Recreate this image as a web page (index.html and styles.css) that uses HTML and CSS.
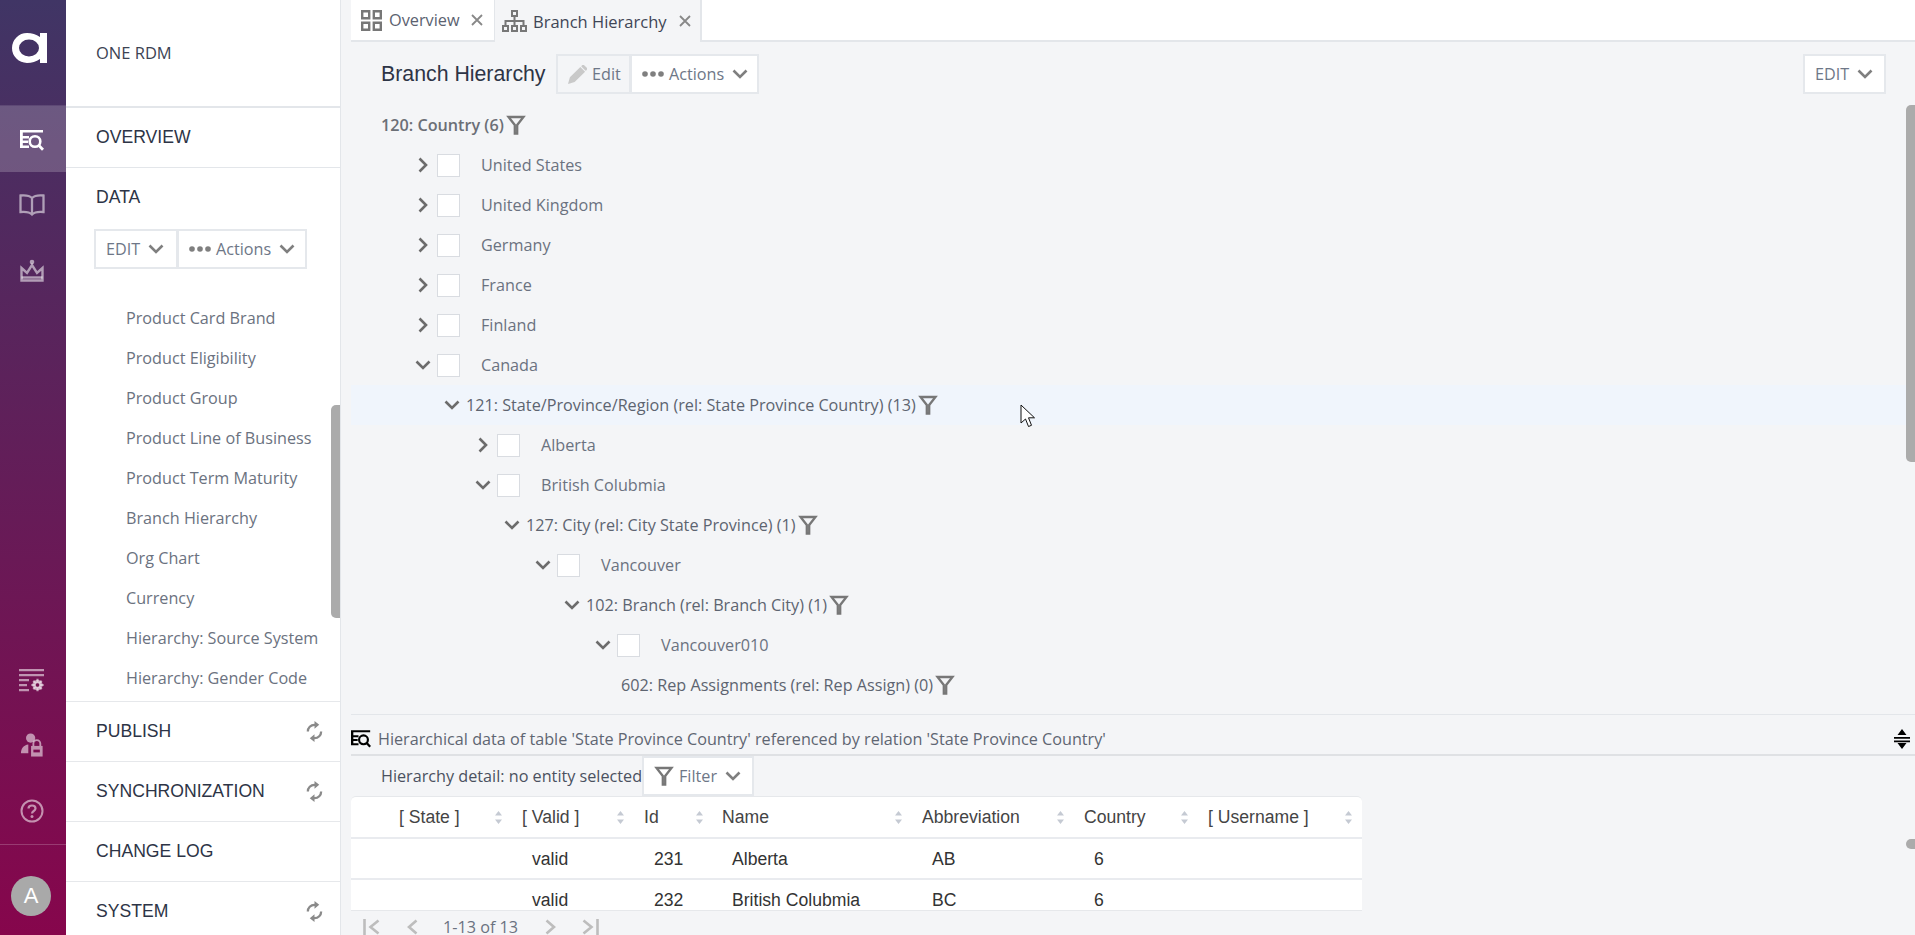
FILE: index.html
```html
<!DOCTYPE html>
<html lang="en">
<head>
<meta charset="utf-8">
<title>Branch Hierarchy</title>
<link rel="stylesheet" href="styles.css">
</head>
<body>
<svg class="defs" width="0" height="0" aria-hidden="true">
  <defs>
    <symbol id="chev-d" viewBox="0 0 16 10"><path d="M1.500 1.500 8 8l6.500-6.500" fill="none" stroke="currentColor" stroke-width="2.600"/></symbol>
    <symbol id="chev-r" viewBox="0 0 10 16"><path d="M1.500 1.500 8 8l-6.500 6.500" fill="none" stroke="currentColor" stroke-width="2.600"/></symbol>
    <symbol id="filter" viewBox="0 0 20 20"><path d="M2.500 2h15L11.200 10v8.500H8.800V10z" fill="none" stroke="currentColor" stroke-width="2.300"/></symbol>
    <symbol id="sync" viewBox="0 0 20 24"><path d="M3 12c0-4 3-7 7-7h1M17 12c0 4-3 7-7 7H9" fill="none" stroke="currentColor" stroke-width="2.400"/><path d="M10 1l5 4-5 4zM10 23l-5-4 5-4z" fill="currentColor"/></symbol>
    <symbol id="eq" viewBox="0 0 24 21"><path d="M0 0h23v2.500H0zM0 6h9v2.500H0zM0 0h2.800v18H0zM0 10.500h8V13H0zM0 15.500h9V18H0z" fill="currentColor"/><circle cx="15" cy="11.500" r="5.300" fill="none" stroke="currentColor" stroke-width="2.600"/><path d="m18.500 15 4.500 4.800" stroke="currentColor" stroke-width="2.800"/></symbol>
    <symbol id="dots" viewBox="0 0 22 6"><circle cx="3" cy="3" r="2.800" fill="currentColor"/><circle cx="11" cy="3" r="2.800" fill="currentColor"/><circle cx="19" cy="3" r="2.800" fill="currentColor"/></symbol>
    <symbol id="sort" viewBox="0 0 7 13"><path d="M3.500 0 7 4.500H0zM3.500 13 0 8.500h7z" fill="currentColor"/></symbol>
  </defs>
</svg>

<div class="app">
  <nav class="rail">
    <div class="rail-logo">
      <svg class="logo" viewBox="0 0 36 30"><path fill-rule="evenodd" d="M15 0a15 15 0 1 0 0 30c5 0 9-1.500 13-4v4h7V0h-7v4C24 1.500 20 0 15 0zM17 6.500a10 8.500 0 1 1 0 17 10 8.500 0 0 1 0-17z" fill="#fff"/></svg>
    </div>
    <a class="rail-item rail-active"><svg class="ic-eq"><use href="#eq"/></svg></a>
    <a class="rail-item">
      <svg class="ic-rail" viewBox="0 0 26 24"><path d="M13 5C10.500 2.500 6 2 1.500 2.500v16.500C6 18.500 10.500 19 13 21.500 15.500 19 20 18.500 24.500 19V2.500C20 2 15.500 2.500 13 5zM13 5v16.500" fill="none" stroke="currentColor" stroke-width="2.300"/></svg>
    </a>
    <a class="rail-item">
      <svg class="ic-rail" viewBox="0 0 26 24"><circle cx="13" cy="3" r="2.300" fill="currentColor"/><path d="M2.500 9 8 14l5-8 5 8 5.500-5v12.500h-21z" fill="none" stroke="currentColor" stroke-width="2.400"/><path d="M2.500 18.500h21" stroke="currentColor" stroke-width="2.400"/></svg>
    </a>
    <div class="rail-gap"></div>
    <a class="rail-item rail-settings">
      <svg class="ic-rail" viewBox="0 0 26 24"><path d="M0 1.200h25M0 6.200h25M0 11.200h10M0 16.200h8M0 21.200h10" stroke="currentColor" stroke-width="2.300"/><circle cx="18.500" cy="16" r="3.700" fill="none" stroke="currentColor" stroke-width="3"/><path d="M18.500 9.800v12.400M12.300 16h12.400M14.300 11.800l8.400 8.400M22.700 11.800l-8.400 8.400" stroke="currentColor" stroke-width="2.200"/><circle cx="18.500" cy="16" r="1.700" fill="#741050"/></svg>
    </a>
    <a class="rail-item">
      <svg class="ic-rail" viewBox="0 0 24 26"><circle cx="10.500" cy="5.500" r="5" fill="currentColor"/><path d="M0 22c0-5 3-9 8-9.500l0 9.500z" fill="currentColor"/><path d="M11 14h12.500v11.500H11z" fill="currentColor"/><path d="M13.500 14v-2.500a3.700 3.700 0 0 1 7.500 0V14" fill="none" stroke="currentColor" stroke-width="2"/><path d="M13.500 19.500h7" stroke="#7a0c50" stroke-width="3"/></svg>
    </a>
    <a class="rail-item">
      <svg class="ic-help" viewBox="0 0 24 24"><circle cx="12" cy="12" r="10.500" fill="none" stroke="currentColor" stroke-width="2"/><path d="M8.500 9.500C8.500 7.500 10 6.500 12 6.500s3.500 1 3.500 3c0 2.500-3.500 2.500-3.500 5" fill="none" stroke="currentColor" stroke-width="2.200"/><circle cx="12" cy="17.500" r="1.500" fill="currentColor"/></svg>
    </a>
    <div class="rail-user"><span class="avatar">A</span></div>
  </nav>

  <aside class="side">
    <div class="side-head">ONE RDM</div>
    <div class="side-row side-overview">OVERVIEW</div>
    <div class="side-data">
      <div class="side-data-title">DATA</div>
      <div class="btn-group side-group">
        <span class="btn btn-side-edit">EDIT <svg class="chev"><use href="#chev-d"/></svg></span>
        <span class="btn btn-side-act"><svg class="dots"><use href="#dots"/></svg> Actions <svg class="chev"><use href="#chev-d"/></svg></span>
      </div>
      <ul class="side-list">
        <li>Product Card Brand</li>
        <li>Product Eligibility</li>
        <li>Product Group</li>
        <li>Product Line of Business</li>
        <li>Product Term Maturity</li>
        <li>Branch Hierarchy</li>
        <li>Org Chart</li>
        <li>Currency</li>
        <li>Hierarchy: Source System</li>
        <li>Hierarchy: Gender Code</li>
      </ul>
    </div>
    <div class="side-row">PUBLISH <svg class="sync"><use href="#sync"/></svg></div>
    <div class="side-row">SYNCHRONIZATION <svg class="sync"><use href="#sync"/></svg></div>
    <div class="side-row">CHANGE LOG</div>
    <div class="side-row">SYSTEM <svg class="sync"><use href="#sync"/></svg></div>
    <div class="side-thumb"></div>
  </aside>

  <main class="main">
    <div class="tabs">
      <div class="tab tab-overview">
        <svg class="tab-ic-o" viewBox="0 0 21 21"><path d="M1.200 1.200h7v7h-7zM12.800 1.200h7v7h-7zM1.200 12.800h7v7h-7zM12.800 12.800h7v7h-7z" fill="none" stroke="currentColor" stroke-width="2.400"/></svg>
        <span>Overview</span>
        <svg class="tab-x" viewBox="0 0 12 12"><path d="m1 1 10 10M11 1 1 11" stroke="currentColor" stroke-width="1.800"/></svg>
      </div>
      <div class="tab tab-active">
        <svg class="tab-ic-b" viewBox="0 0 25 22"><path d="M9 0h7v7H9zM0 15h7v7H0zM9 15h7v7H9zM18 15h7v7h-7z" fill="currentColor"/><path d="M12.500 6v9M3.500 15v-4h18v4" fill="none" stroke="currentColor" stroke-width="2"/><path d="M11 2h3v3h-3zM2 17h3v3H2zM11 17h3v3h-3zM20 17h3v3h-3z" fill="#f4f5f7"/></svg>
        <span>Branch Hierarchy</span>
        <svg class="tab-x" viewBox="0 0 12 12"><path d="m1 1 10 10M11 1 1 11" stroke="currentColor" stroke-width="1.800"/></svg>
      </div>
      <div class="tabs-rest"></div>
    </div>

    <div class="title-row">
      <h1 class="title">Branch Hierarchy</h1>
      <div class="btn-group">
        <span class="btn btn-off"><svg class="pencil" viewBox="0 0 20 20"><path d="M0 20l2-7L13 2l5 5L7 18zM14.500 .5a2 2 0 0 1 2.800 0l2.200 2.200a2 2 0 0 1 0 2.800L18.500 6 14 1.500z" fill="currentColor"/></svg> Edit</span>
        <span class="btn btn-act"><svg class="dots"><use href="#dots"/></svg> Actions <svg class="chev"><use href="#chev-d"/></svg></span>
      </div>
      <div class="title-fill"></div>
      <span class="btn btn-edit">EDIT <svg class="chev"><use href="#chev-d"/></svg></span>
    </div>

    <div class="tree">
      <div class="row rel-root"><b class="rel-strong">120: Country (6)</b><svg class="filter"><use href="#filter"/></svg></div>
      <div class="row ent l0"><svg class="exp-r"><use href="#chev-r"/></svg><i class="cb"></i><span class="lbl">United States</span></div>
      <div class="row ent l0"><svg class="exp-r"><use href="#chev-r"/></svg><i class="cb"></i><span class="lbl">United Kingdom</span></div>
      <div class="row ent l0"><svg class="exp-r"><use href="#chev-r"/></svg><i class="cb"></i><span class="lbl">Germany</span></div>
      <div class="row ent l0"><svg class="exp-r"><use href="#chev-r"/></svg><i class="cb"></i><span class="lbl">France</span></div>
      <div class="row ent l0"><svg class="exp-r"><use href="#chev-r"/></svg><i class="cb"></i><span class="lbl">Finland</span></div>
      <div class="row ent l0"><svg class="exp-d"><use href="#chev-d"/></svg><i class="cb"></i><span class="lbl">Canada</span></div>
      <div class="row rel r0 row-hover"><svg class="exp-rel"><use href="#chev-d"/></svg><span class="rel-text">121: State/Province/Region (rel: State Province Country) (13)</span><svg class="filter"><use href="#filter"/></svg></div>
      <div class="row ent l1"><svg class="exp-r"><use href="#chev-r"/></svg><i class="cb"></i><span class="lbl">Alberta</span></div>
      <div class="row ent l1"><svg class="exp-d"><use href="#chev-d"/></svg><i class="cb"></i><span class="lbl">British Colubmia</span></div>
      <div class="row rel r1"><svg class="exp-rel"><use href="#chev-d"/></svg><span class="rel-text">127: City (rel: City State Province) (1)</span><svg class="filter"><use href="#filter"/></svg></div>
      <div class="row ent l2"><svg class="exp-d"><use href="#chev-d"/></svg><i class="cb"></i><span class="lbl">Vancouver</span></div>
      <div class="row rel r2"><svg class="exp-rel"><use href="#chev-d"/></svg><span class="rel-text">102: Branch (rel: Branch City) (1)</span><svg class="filter"><use href="#filter"/></svg></div>
      <div class="row ent l3"><svg class="exp-d"><use href="#chev-d"/></svg><i class="cb"></i><span class="lbl">Vancouver010</span></div>
      <div class="row rel-leaf"><span class="rel-text">602: Rep Assignments (rel: Rep Assign) (0)</span><svg class="filter"><use href="#filter"/></svg></div>
    </div>

    <div class="detail-head">
      <svg class="ic-eq-sm"><use href="#eq"/></svg>
      <span>Hierarchical data of table 'State Province Country' referenced by relation 'State Province Country'</span>
      <svg class="split" viewBox="0 0 16 20"><path d="M8 0l4.500 6h-9zM8 20l-4.500-6h9zM0 8h16v1.800H0zM0 11.500h16v1.800H0z" fill="#000"/></svg>
    </div>
    <div class="detail-bar">
      <span class="detail-label">Hierarchy detail: no entity selected</span>
      <span class="btn btn-filter"><svg class="filter-btn"><use href="#filter"/></svg> Filter <svg class="chev"><use href="#chev-d"/></svg></span>
    </div>

    <div class="table">
      <div class="tr th">
        <div class="c c1"><span>[ State ]</span><svg class="sort"><use href="#sort"/></svg></div>
        <div class="c c2"><span>[ Valid ]</span><svg class="sort"><use href="#sort"/></svg></div>
        <div class="c c3"><span>Id</span><svg class="sort"><use href="#sort"/></svg></div>
        <div class="c c4"><span>Name</span><svg class="sort"><use href="#sort"/></svg></div>
        <div class="c c5"><span>Abbreviation</span><svg class="sort"><use href="#sort"/></svg></div>
        <div class="c c6"><span>Country</span><svg class="sort"><use href="#sort"/></svg></div>
        <div class="c c7"><span>[ Username ]</span><svg class="sort"><use href="#sort"/></svg></div>
      </div>
      <div class="tr td">
        <div class="c c1"></div><div class="c c2">valid</div><div class="c c3">231</div><div class="c c4">Alberta</div><div class="c c5">AB</div><div class="c c6">6</div><div class="c c7"></div>
      </div>
      <div class="tr td">
        <div class="c c1"></div><div class="c c2">valid</div><div class="c c3">232</div><div class="c c4">British Colubmia</div><div class="c c5">BC</div><div class="c c6">6</div><div class="c c7"></div>
      </div>
    </div>

    <div class="pager">
      <svg class="pg pg-first" viewBox="0 0 18 16"><path d="M1.500 0v16" stroke="currentColor" stroke-width="2.600"/><path d="M15.500 1.500 7.500 8l8 6.500" fill="none" stroke="currentColor" stroke-width="2.600"/></svg>
      <svg class="pg pg-prev" viewBox="0 0 11 16"><path d="M9.500 1.500 2 8l7.500 6.500" fill="none" stroke="currentColor" stroke-width="2.600"/></svg>
      <span class="pg-text">1-13 of 13</span>
      <svg class="pg pg-next" viewBox="0 0 11 16"><path d="M1.500 1.500 9 8l-7.500 6.500" fill="none" stroke="currentColor" stroke-width="2.600"/></svg>
      <svg class="pg pg-last" viewBox="0 0 18 16"><path d="M2.500 1.500 10.500 8l-8 6.500" fill="none" stroke="currentColor" stroke-width="2.600"/><path d="M16.500 0v16" stroke="currentColor" stroke-width="2.600"/></svg>
    </div>

    <div class="thumb-main"></div>
    <div class="thumb-dot"></div>
    <svg class="cursor" viewBox="0 0 15 24"><path d="M1 1v18l4.500-4 3 7.500 3-1.200-3-7.500H14.500z" fill="#fff" stroke="#111" stroke-width="1"/></svg>
  </main>
</div>
</body>
</html>
```

FILE: styles.css
```css
* { box-sizing: border-box; }
html, body { margin: 0; height: 100%; overflow: hidden; }
body { font-family: "Open Sans", sans-serif; color: #555; }
.defs { position: absolute; }
ul { list-style: none; margin: 0; padding: 0; }
svg { display: block; flex: none; }

.app { display: flex; width: 1915px; height: 935px; }

/* rail */
.rail {
  width: 66px; flex: none; display: flex; flex-direction: column;
  background: linear-gradient(180deg, #403565 0%, #86064c 100%);
  color: rgba(255,255,255,.55);
}
.rail-logo { height: 106px; flex: none; display: flex; align-items: flex-start; padding: 33px 0 0 12px; border-bottom: 1px solid rgba(255,255,255,.12); }
.logo { width: 36px; height: 30px; }
.rail-item { height: 66px; flex: none; display: flex; align-items: center; justify-content: center; padding-right: 2px; }
.rail-active { background: rgba(255,255,255,.2); color: #fff; padding-top: 3px; }
.rail-settings { padding-top: 4px; }
.ic-eq { width: 24px; height: 21px; }
.ic-rail { width: 26px; height: 24px; }
.ic-help { width: 24px; height: 24px; }
.rail-gap { flex: 1; }
.rail-user { height: 91px; flex: none; border-top: 1px solid rgba(255,255,255,.2); padding: 31px 0 0 11px; }
.avatar {
  display: flex; align-items: center; justify-content: center;
  width: 40px; height: 40px; border-radius: 50%;
  background: #a9a9a9; color: #fff; font: 22px "Liberation Sans", sans-serif;
}

/* sidebar */
.side {
  position: relative; width: 275px; flex: none; height: 935px; overflow: hidden;
  display: flex; flex-direction: column; background: #fff;
  border-right: 1px solid #e3e6ea;
}
.side-head {
  height: 108px; flex: none; display: flex; align-items: center; padding: 0 0 2px 30px;
  border-bottom: 2px solid #e3e6ea; font-size: 16.500px; color: #3c4353;
}
.side-row {
  height: 60px; flex: none; display: flex; align-items: center; justify-content: space-between;
  padding: 0 16px 0 30px; border-top: 1px solid #e6e8eb;
  font: 17.600px "Liberation Sans", sans-serif; color: #2d3446;
}
.side-overview { height: 60px; border-top: 0; border-bottom: 1px solid #e3e6ea; }
.side-data { height: 533px; flex: none; overflow: hidden; display: flex; flex-direction: column; }
.side-data-title { height: 61px; flex: none; display: flex; align-items: center; padding: 0 0 3px 30px; font: 17.600px "Liberation Sans", sans-serif; color: #2d3446; }
.side-group { margin-left: 28px; align-self: flex-start; flex: none; }
.btn-side-edit { width: 84px; }
.btn-side-act { width: 130px; }
.side-list { padding: 29px 0 0 60px; }
.side-list li { height: 40px; line-height: 40px; font-size: 16.200px; color: #6b7280; white-space: nowrap; }
.sync { width: 19px; height: 23px; color: #8a8a8a; }
.side-thumb { position: absolute; right: 0; top: 405px; width: 9px; height: 213px; border-radius: 5px 0 0 5px; background: #ababab; }

/* buttons */
.btn-group { display: flex; }
.btn {
  height: 40px; display: inline-flex; align-items: center; gap: 5px; padding: 0 10px;
  background: #fff; border: 2px solid #e5e8ec; font-size: 16.200px; color: #6e7787; white-space: nowrap;
}
.btn + .btn { margin-left: -1px; }
.chev { width: 16px; height: 10px; color: #7f7f7f; margin-left: 3px; }
.dots { width: 22px; height: 6px; color: #7f7f7f; }
.btn-off { background: #f4f5f7; width: 75px; }
.btn-act { width: 129px; }
.pencil { width: 19px; height: 19px; color: #c9c9c9; }
.btn-edit { width: 83px; }
.btn-filter { width: 112px; height: 40px; }

/* main */
.main { position: relative; flex: 1; min-width: 0; height: 935px; overflow: hidden; background: #f4f5f7; display: flex; flex-direction: column; }

.tabs { height: 42px; flex: none; display: flex; padding-left: 10px; }
.tab { display: flex; align-items: center; height: 42px; border-bottom: 2px solid #e3e6ea; }
.tab-overview { width: 143px; padding-left: 10px; background: #fff; color: #5b6270; font-size: 16.300px; }
.tab-overview span { margin-left: 7px; width: 72px; }
.tab-active { width: 208px; padding-left: 7px; border-bottom: 0; border-right: 2px solid #e3e6ea; border-left: 1px solid #e3e6ea; color: #3f4656; font-size: 16.500px; }
.tab-active span { margin-left: 6px; width: 136px; white-space: nowrap; }
.tab-ic-o { width: 21px; height: 21px; color: #777; }
.tab-ic-b { width: 25px; height: 22px; color: #777; }
.tab-x { width: 12px; height: 12px; margin-left: 10px; color: #888; }
.tabs-rest { flex: 1; background: #fff; border-bottom: 2px solid #e3e6ea; }

.title-row { height: 63px; flex: none; display: flex; align-items: flex-start; padding: 12px 29px 0 40px; }
.title { margin: 0; width: 175px; height: 40px; font: 400 21.300px/40px "Liberation Sans", sans-serif; color: #2d3446; white-space: nowrap; }
.title-fill { flex: 1; }

.tree { height: 610px; flex: none; margin-left: 10px; border-bottom: 1px solid #e3e6ea; }
.row { height: 40px; display: flex; align-items: center; white-space: nowrap; font-size: 16.200px; color: #6b7280; }
.row-hover { background: #f0f5fc; }
.rel-root { padding-left: 30px; }
.rel-strong { font-weight: 600; color: #6b6f76; }
.rel-leaf { padding-left: 270px; }
.rel-text { color: #5d6470; }
.l0 { padding-left: 65px; } .l1 { padding-left: 125px; } .l2 { padding-left: 185px; } .l3 { padding-left: 245px; }
.r0 { padding-left: 90px; } .r1 { padding-left: 150px; } .r2 { padding-left: 210px; }
.exp-r { width: 10px; height: 16px; color: #6c6c6c; margin: 0 9px 0 2px; }
.exp-d { width: 16px; height: 10px; color: #6c6c6c; margin: 0 6px 0 -1px; }
.exp-rel { width: 16px; height: 10px; color: #6c6c6c; margin: 0 6px 0 3px; }
.cb { width: 23px; height: 23px; background: #fff; border: 1px solid #d9dce1; margin-right: 21px; flex: none; }
.filter { width: 20px; height: 20px; margin-left: 2px; color: #777; }

.detail-head { height: 41px; flex: none; margin-left: 10px; padding-top: 8px; display: flex; align-items: center; border-bottom: 2px solid #dfe1e4; font-size: 16.200px; color: #5f6672; }
.ic-eq-sm { width: 20px; height: 18px; color: #000; margin-right: 7px; }
.detail-head span { flex: 1; white-space: nowrap; }
.split { width: 16px; height: 20px; margin-right: 5px; }
.detail-bar { height: 40px; flex: none; padding-left: 40px; display: flex; align-items: center; font-size: 16.200px; color: #4b5160; }
.detail-label { width: 261px; white-space: nowrap; }
.filter-btn { width: 20px; height: 20px; color: #777; }

.table { width: 1011px; height: 115px; flex: none; margin-left: 10px; overflow: hidden; background: #fff; border-top: 1px solid #e6e8eb; border-bottom: 1px solid #e6e8eb; border-radius: 5px 5px 0 0; font: 17.600px "Liberation Sans", sans-serif; }
.tr { display: grid; grid-template-columns: 156px 122px 79px 199px 162px 124px 169px; height: 41px; border-bottom: 2px solid #e9ebef; align-items: center; color: #333; }
.th { height: 42px; color: #444; }
.td { height: 41px; padding-top: 2px; }
.c { display: flex; align-items: center; justify-content: space-between; white-space: nowrap; padding: 0 5px 0 25px; }
.th .c { padding-left: 15px; }
.th .c1 { padding-left: 48px; }
.th .c4 { padding-left: 14px; }
.td .c4 { padding-left: 24px; }
.th .c7 { padding-right: 10px; }
.sort { width: 7px; height: 13px; color: #c5cad3; }

.pager { height: 24px; flex: none; display: flex; align-items: center; padding: 8px 0 0 22px; color: #bdbdbd; }
.pg { height: 16px; }
.pg-first { width: 18px; }
.pg-prev { width: 11px; margin-left: 26px; }
.pg-text { margin: 0 26px 0 25px; font-size: 16.200px; line-height: 16px; color: #6b7280; width: 76px; white-space: nowrap; }
.pg-next { width: 11px; }
.pg-last { width: 18px; margin-left: 25px; }

.thumb-main { position: absolute; right: 0; top: 105px; width: 9px; height: 357px; background: #ababab; border-radius: 5px 0 0 5px; }
.thumb-dot { position: absolute; right: 0; top: 839px; width: 9px; height: 10px; background: #ababab; border-radius: 5px 0 0 5px; }
.cursor { position: absolute; left: 679px; top: 404px; width: 15px; height: 24px; }
```
